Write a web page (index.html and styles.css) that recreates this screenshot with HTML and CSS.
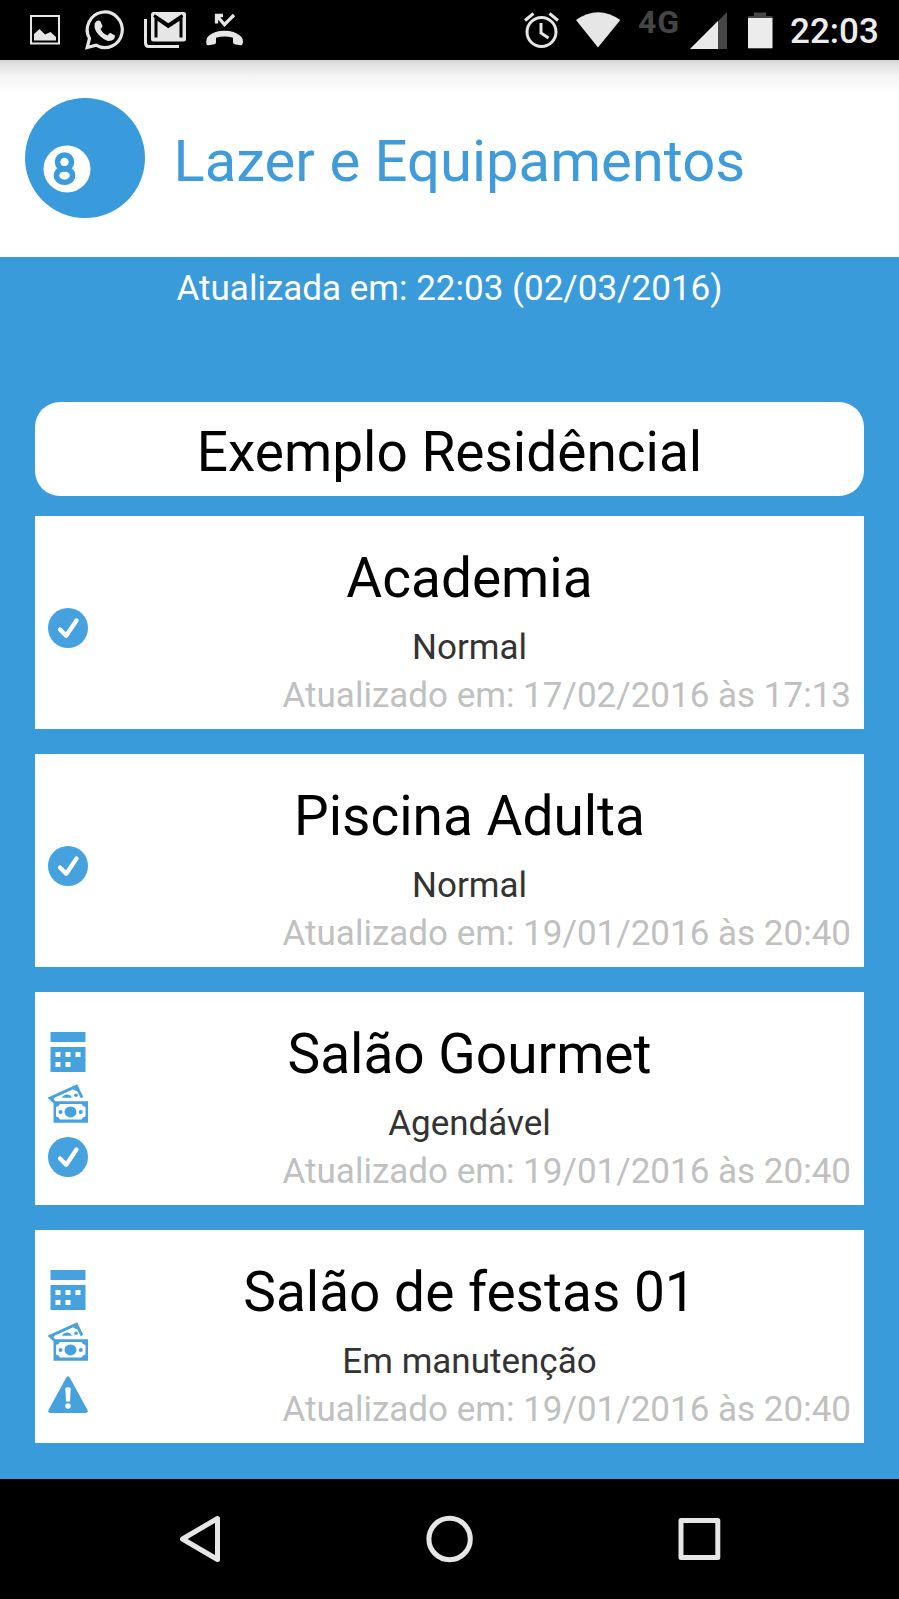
FILE: index.html
```html
<!DOCTYPE html>
<html lang="pt-BR">
<head>
<meta charset="utf-8">
<title>Lazer e Equipamentos</title>
<link rel="stylesheet" href="styles.css">
</head>
<body>
<svg class="defs" aria-hidden="true">
  <symbol id="check" viewBox="0 0 40 40"><circle cx="20" cy="20" r="20" fill="#46a1df"/><path d="M12 21.500l6.200 6.300L28.500 12.500" fill="none" stroke="#fff" stroke-width="4.300" stroke-linecap="round" stroke-linejoin="round"/></symbol>
  <symbol id="calendar" viewBox="0 0 40 40"><path fill="#46a1df" fill-rule="evenodd" d="M2.500 0h35v10h-35zM2.500 15h35v25h-35zM7.500 20v5h5v-5zM17.500 20v5h5v-5zM27.500 20v5h5v-5zM7.500 30v5h5v-5zM17.500 30v5h5v-5z"/></symbol>
  <symbol id="money" viewBox="0 1.3 40 40"><path d="M6.500 19.500L2 15.500 28.500 3.500l5.500 11.500" fill="none" stroke="#46a1df" stroke-width="2.800"/><path d="M5 17.500l2-3.500-3 1zM25 7l4-3 2 5zM14 15c1-3.500 8-5 10 0z" fill="#46a1df"/><circle cx="28" cy="12.500" r="1.800" fill="#46a1df"/><path d="M5.500 18.500h34.500v21.500h-34.500z" fill="#46a1df"/><path d="M12 21.300h21.500q1 2.500 4 3v9.500q-3 .5-4 3h-21.500q-1-2.500-4-3v-9.500q3-.5 4-3z" fill="#fff"/><ellipse cx="22.500" cy="29.200" rx="6" ry="5.500" fill="#46a1df"/><circle cx="12.500" cy="29.300" r="2" fill="#46a1df"/><circle cx="32.800" cy="29.300" r="2" fill="#46a1df"/></symbol>
  <symbol id="warning" viewBox="0 0 40 40"><path d="M18 3q2-3.500 4 0l17.500 32q1 3-2 3h-35q-3 0-2-3z" fill="#46a1df"/><path d="M17.300 13q2.700-1.500 5.400 0l-.7 13.500h-4z" fill="#fff"/><circle cx="20" cy="31" r="2.700" fill="#fff"/></symbol>
</svg>
<div class="screen">
  <div class="status-bar">
    <svg class="status-icons" viewBox="0 0 720 60" fill="#e6e6e6">
      <rect x="31" y="16" width="28" height="27.500" fill="none" stroke="#e6e6e6" stroke-width="2"/>
      <path d="M34 40.500V34l5.500-5 5.500 5.500 5.500-2.500 5.500 5v3.500z"/>
      <path d="M87.200 47.500l2.300-9a17.500 17.800 0 1 1 6.500 6.700z" fill="none" stroke="#e6e6e6" stroke-width="3.200"/>
      <path d="M96 21.500q3-2 4.500 0l2 4.500q0 1-2 3 2 4.500 7 6.500 2-3 3-2.500l4.500 2.500q0 5-6 5.500-3 0-8-4-7-6-6.500-11.500 0-2.500 1.500-4z"/>
      <path d="M145.500 19v24q0 3.500 3.500 3.500h30" fill="none" stroke="#e6e6e6" stroke-width="3"/>
      <rect x="151" y="12" width="35" height="29.500" rx="2.500"/>
      <path d="M156 37.500V18l12.300 8.500L181 18v19.500" fill="none" stroke="#000" stroke-width="3"/>
      <path d="M154 15.500l14.300 9.500L182.500 15.500" fill="none" stroke="#000" stroke-width="3"/>
      <path d="M216.500 23.500v-8h6.500M217 16l7.500 8.500 9.500-9.500" fill="none" stroke="#e6e6e6" stroke-width="3.300"/>
      <path d="M206.500 44q-1-5 2-8 6-5.300 16-5.300t16 5.300q3.500 3 2 8-.5 1.500-2 1.200l-6-1q-1.500-.5-1.500-2v-4.500q-8.500-2.500-17 0v4.500q0 1.500-1.500 2l-6 1q-1.500.3-2-1.200z"/>
      <circle cx="541.500" cy="32" r="14.500" fill="none" stroke="#e6e6e6" stroke-width="3"/>
      <path d="M541 23v10l7.500 5M525 20.500l8.500-7M558 20.500l-8.500-7" fill="none" stroke="#e6e6e6" stroke-width="3"/>
      <path d="M576 20q22-15.500 44.300 0L598 47.500z"/>
      <text class="network" x="638" y="32.500">4G</text>
    </svg>
    <svg class="signal" viewBox="0 0 90 60"><path d="M0 49L37 12v37z" fill="#454545"/><path d="M0 49L28 21v28z" fill="#e9e9e9"/><path d="M58 16h6v-3.500h12V16h6.500v3H58z" fill="#454545"/><path d="M58 18h24.500v30.300H58z" fill="#ececec"/></svg>
    <span class="clock">22:03</span>
  </div>
  <header class="header">
    <svg class="ball" viewBox="0 0 120 120"><circle cx="60" cy="60" r="60" fill="#3a9bdc"/><circle cx="42" cy="71" r="23.500" fill="#fff"/><g fill="none" stroke="#3a9bdc" stroke-width="5.500"><circle cx="39.500" cy="64" r="7"/><ellipse cx="39.500" cy="77.500" rx="8" ry="6.800"/></g></svg>
    <h1 class="title">Lazer e Equipamentos</h1>
  </header>
  <main class="content">
    <p class="updated">Atualizada em: 22:03 (02/03/2016)</p>
    <h2 class="building">Exemplo Residêncial</h2>
    <section class="card">
      <div class="icons"><svg><use href="#check"/></svg></div>
      <div class="info"><h3 class="name">Academia</h3><p class="state">Normal</p><p class="date">Atualizado em: 17/02/2016 às 17:13</p></div>
    </section>
    <section class="card">
      <div class="icons"><svg><use href="#check"/></svg></div>
      <div class="info"><h3 class="name">Piscina Adulta</h3><p class="state">Normal</p><p class="date">Atualizado em: 19/01/2016 às 20:40</p></div>
    </section>
    <section class="card">
      <div class="icons"><svg><use href="#calendar"/></svg><svg><use href="#money"/></svg><svg><use href="#check"/></svg></div>
      <div class="info"><h3 class="name">Salão Gourmet</h3><p class="state">Agendável</p><p class="date">Atualizado em: 19/01/2016 às 20:40</p></div>
    </section>
    <section class="card">
      <div class="icons"><svg><use href="#calendar"/></svg><svg><use href="#money"/></svg><svg><use href="#warning"/></svg></div>
      <div class="info"><h3 class="name">Salão de festas 01</h3><p class="state">Em manutenção</p><p class="date">Atualizado em: 19/01/2016 às 20:40</p></div>
    </section>
  </main>
  <nav class="nav">
    <svg viewBox="0 0 899 120" fill="none" stroke="#e6e6e6" stroke-width="5" stroke-linejoin="round"><path d="M217.500 39.500v41L182.500 60z"/><circle cx="449.600" cy="60" r="20.700"/><path d="M681 41.500h36.800v37H681z"/></svg>
  </nav>
</div>
</body>
</html>
```
FILE: styles.css
```css
* { box-sizing: border-box; margin: 0; padding: 0; }
body { font-family: Roboto, sans-serif; background: #000; }
h1, h2, h3 { font-weight: 400; }
.defs { position: absolute; width: 0; height: 0; }
.screen { width: 899px; height: 1599px; display: flex; flex-direction: column; overflow: hidden; }
.status-bar { height: 60px; background: #000; display: flex; }
.status-icons { width: 720px; height: 60px; margin-right: -30px; flex: none; }
.network { font: 700 32px Roboto, sans-serif; fill: #454545; letter-spacing: 1px; }
.signal { width: 90px; height: 60px; flex: none; }
.clock { margin-left: 10px; font-size: 35px; font-weight: 500; line-height: 63px; color: #ececec; }
.header { height: 197px; display: flex; background: linear-gradient(#d2d2d2 0, #e2e2e2 5px, #f3f3f3 15px, #fff 33px); padding: 38px 0 0 25px; }
.ball { width: 120px; height: 120px; flex: none; }
.title { margin-left: 28.500px; font-size: 58px; line-height: 127px; color: #3f9bda; white-space: nowrap; }
.content { height: 1222px; background: #3a9bdb; padding: 0 35px; display: flex; flex-direction: column; }
.updated { height: 60px; font-size: 35px; line-height: 63px; color: #fff; text-align: center; }
.building { margin-top: 85px; height: 94px; border-radius: 25px; background: #fff; font-size: 55px; line-height: 100px; text-align: center; flex: none; }
.card { height: 213px; margin-top: 25px; background: #fff; display: flex; flex: none; }
.building + .card { margin-top: 20px; }
.icons { width: 53px; padding: 11.500px 0 0 12.500px; display: flex; flex-direction: column; justify-content: center; gap: 12.500px; flex: none; }
.icons svg { width: 40px; height: 40px; flex: none; }
.info { flex: 1; padding: 29px 13px 0 0; text-align: center; white-space: nowrap; }
.name { font-size: 55px; line-height: 66px; color: #000; }
.state { margin-top: 13px; font-size: 35px; line-height: 48px; color: #333; }
.date { font-size: 35px; line-height: 47px; color: #c0c0c0; text-align: right; }
.nav { height: 120px; background: #000; }
.nav svg { display: block; width: 899px; height: 120px; }
```
